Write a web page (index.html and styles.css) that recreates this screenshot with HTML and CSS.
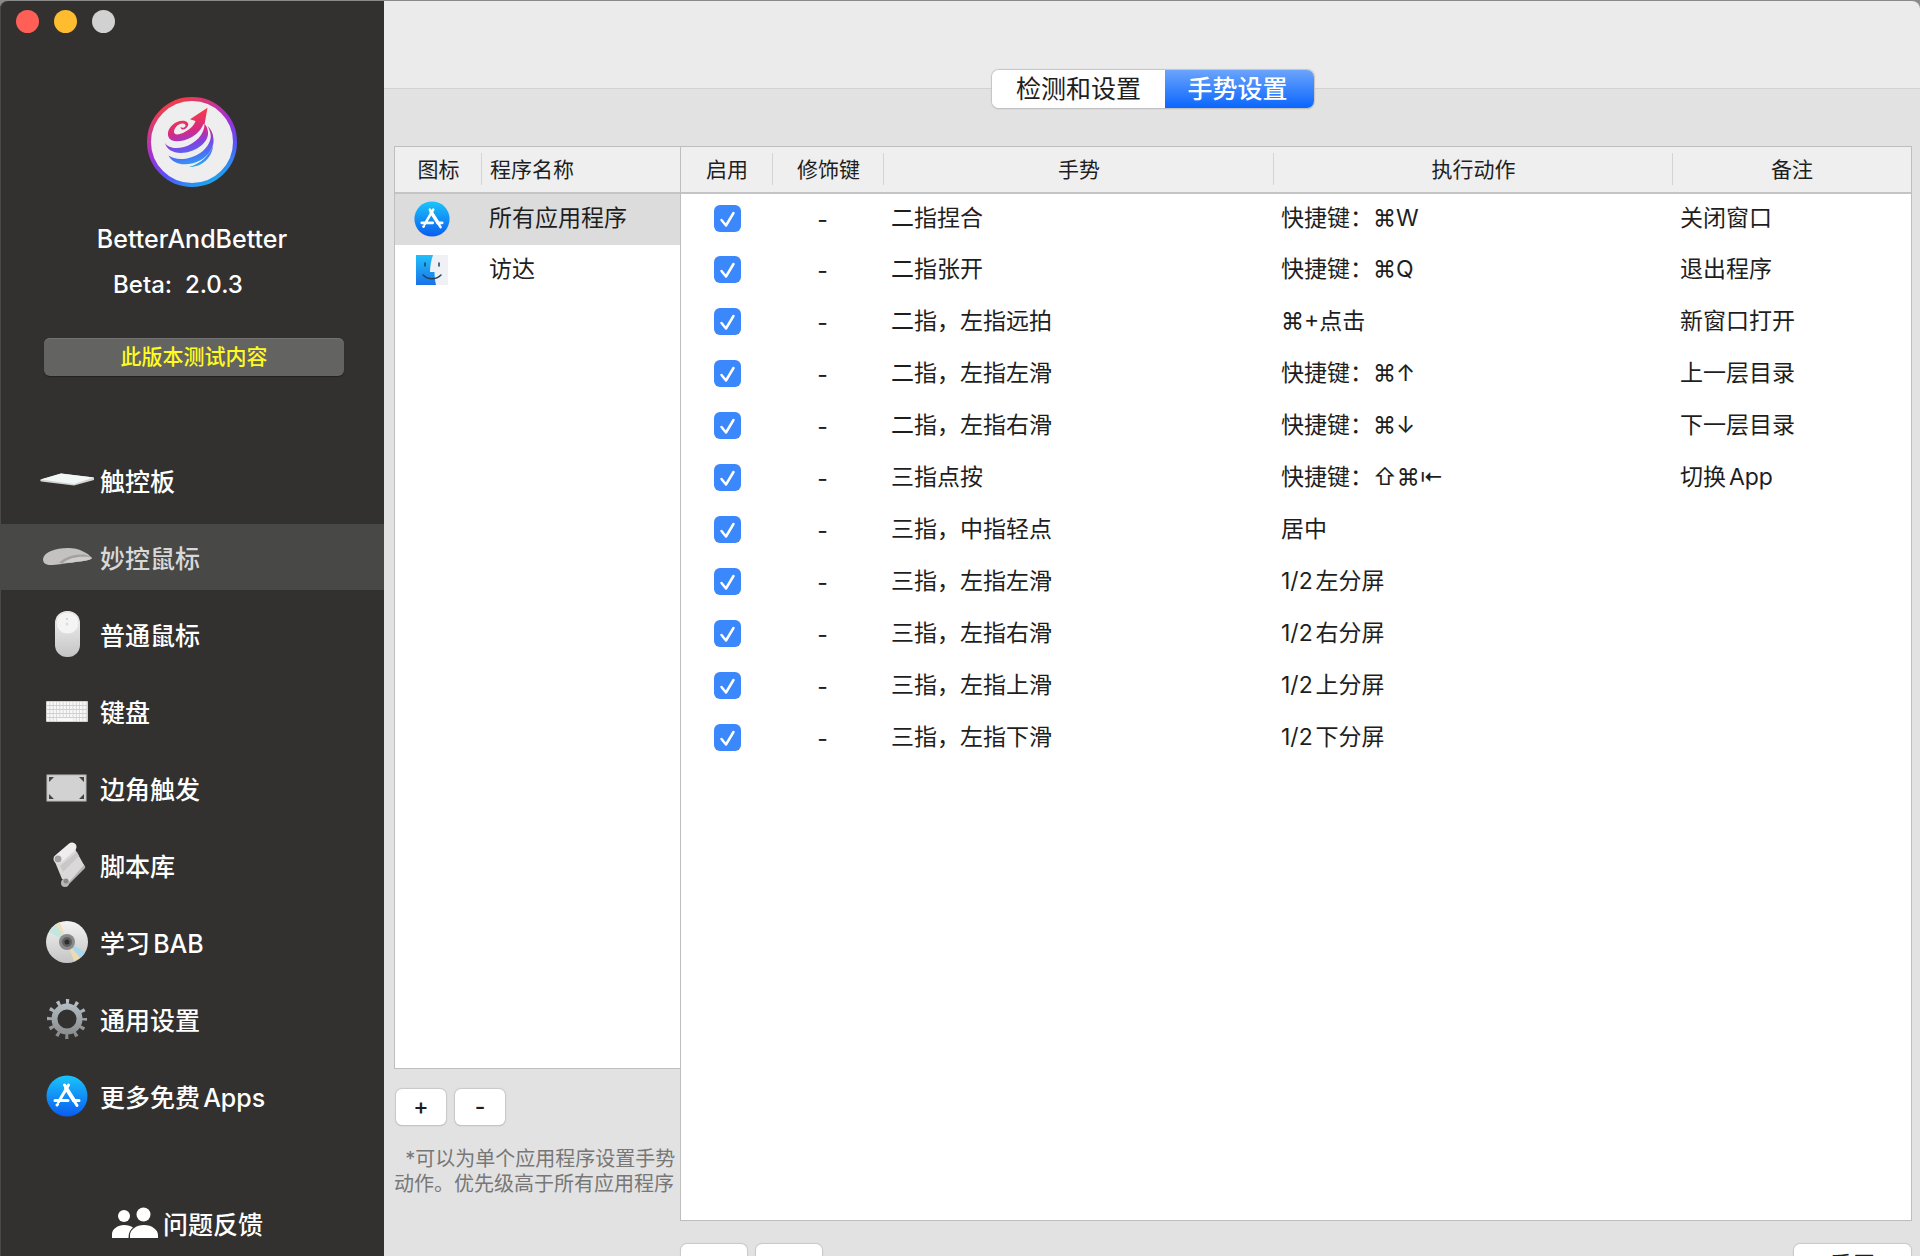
FILE: index.html
```html
<!DOCTYPE html>
<html lang="zh-CN">
<head>
  <meta charset="UTF-8">
  <meta name="viewport" content="width=device-width, initial-scale=1">
  <title>BetterAndBetter</title>
  <link rel="stylesheet" href="styles.css">
</head>
<body>
  <!-- shared gradients and icons -->
  <svg class="defs" aria-hidden="true">
    <defs>
      <linearGradient id="storeBlue" x1="0" y1="0" x2="0" y2="1">
        <stop offset="0" stop-color="#1ac4fb"/>
        <stop offset="1" stop-color="#0a5cf0"/>
      </linearGradient>
      <linearGradient id="silver" x1="0" y1="0" x2="0" y2="1">
        <stop offset="0" stop-color="#f4f4f4"/>
        <stop offset="1" stop-color="#c4c4c4"/>
      </linearGradient>
    </defs>
    <symbol id="appstore" viewBox="0 0 42 42">
      <circle cx="21" cy="21" r="20.5" fill="url(#storeBlue)"/>
      <g stroke="#fff" stroke-width="3" stroke-linecap="round">
        <path d="M22.500 10L12.500 27M9 25.500H22M27.500 25.500H33M18.500 10L31 30.500M11 30L11.500 29.500"/>
        <path d="M20 13L28 25.500" stroke-width="4"/>
      </g>
    </symbol>
  </svg>

  <div class="window">
    <aside class="sidebar">
      <div class="traffic">
        <button class="dot red" aria-label="关闭"></button>
        <button class="dot yellow" aria-label="最小化"></button>
        <button class="dot gray" aria-label="缩放"></button>
      </div>

      <div class="brand">
        <svg class="logo" viewBox="0 0 90 90" aria-hidden="true">
          <defs>
            <linearGradient id="ring" x1="0.250" y1="0" x2="0.750" y2="1">
              <stop offset="0" stop-color="#f8403c"/>
              <stop offset="0.450" stop-color="#a030d8"/>
              <stop offset="0.700" stop-color="#5a50f8"/>
              <stop offset="1" stop-color="#12b0f0"/>
            </linearGradient>
            <linearGradient id="swirl" gradientUnits="userSpaceOnUse" x1="38" y1="14" x2="50" y2="72">
              <stop offset="0" stop-color="#fb3d3d"/>
              <stop offset="0.350" stop-color="#d42a86"/>
              <stop offset="0.550" stop-color="#8440e0"/>
              <stop offset="0.750" stop-color="#4a70f6"/>
              <stop offset="1" stop-color="#22b4f0"/>
            </linearGradient>
          </defs>
          <circle cx="45" cy="45" r="43" fill="#eee" stroke="url(#ring)" stroke-width="4"/>
          <g fill="url(#swirl)">
            <path d="M60.500 10.700L43 22.300L48.500 24C47 29 42 33 36 36C30 38.500 26.500 37.500 27 34C28 29 33 26 36 26.500C39 27 39.500 29.500 37 30.500C35.500 31 34.500 30.500 33.500 30C34 34.500 40 32.500 41.300 28C41.500 24 36 22.500 30 25C23 28 19.500 35 21.500 40C24 46.500 36 45 45 40C51 36.500 54.500 31.500 56.500 27L57.500 27.500Z"/>
            <path d="M18 46C19.500 53 28 57.500 39 55.500C52 53 62 44 61 35C60.500 31 59.500 29 57.500 27C57.500 37 49 46.500 37 50C28 52.500 21 50.500 18 46Z"/>
            <path d="M21.500 58.500C25 65.500 34 69 45 66.500C58 63.500 67.500 53 66.500 42C66 36 64 32 60.500 29C64 35 65 41 62 46C58 54 50 59.500 40 61.500C32 63 26 61.500 21.500 58.500Z"/>
            <path d="M42 70C54 70.500 65 61 66 49C62 59 53 67 42 70Z"/>
          </g>
        </svg>
        <h1>BetterAndBetter</h1>
        <p class="version">Beta:&nbsp;&nbsp;2.0.3</p>
        <button class="notes">此版本测试内容</button>
      </div>

      <nav class="menu">
        <a href="#trackpad">
          <svg viewBox="0 0 56 48" aria-hidden="true"><path d="M1 24L22 17.500L55 21.500V24L35 29.500L2 25.500Z" fill="#d2d2d2"/><path d="M1 23.500L22 17.500L55 21.500L35 28Z" fill="#f3f6f7"/></svg>
          触控板
        </a>
        <a href="#magic-mouse" class="active">
          <svg viewBox="0 0 56 48" aria-hidden="true"><path d="M4 26C5 19 16 15 29 15C40 15 49 20 53 25C51 28 43 28 33 29.500C22 31 12 33 8 31.500C5 30.500 4 29 4 26Z" fill="#c4c2c0"/><path d="M20 30C26 24 34 21 45 21.500C48 22 51 23 53 25C50 28 42 28 33 29.500C28 30 24 31 20 30Z" fill="#a3a19f"/><path d="M24 30C30 25 38 23 50 24C52 24.500 52 25 53 25C50 28 42 28 33 29.500Z" fill="#cfcdcb"/></svg>
          妙控鼠标
        </a>
        <a href="#mouse">
          <svg viewBox="0 0 56 48" aria-hidden="true"><rect x="16" y="1" width="25" height="46" rx="12" fill="url(#silver)"/><rect x="17" y="2" width="23" height="22" rx="11" fill="#f4f4f4" stroke="#ddd"/><circle cx="28" cy="9" r="1" fill="#ccc"/><circle cx="28" cy="14" r="1.500" fill="#ddd"/></svg>
          普通鼠标
        </a>
        <a href="#keyboard">
          <svg viewBox="0 0 56 48" aria-hidden="true"><rect x="7" y="14" width="42" height="21" rx="1" fill="#d0d0d0"/><path d="M8 16.500H48M8 20.500H48M8 24.500H48M8 28.500H48M8 32.500H48" stroke="#f8f8f8" stroke-width="3" stroke-dasharray="2.500 0.800"/><path d="M20 32.500H34" stroke="#f8f8f8" stroke-width="3"/></svg>
          键盘
        </a>
        <a href="#corners">
          <svg viewBox="0 0 56 48" aria-hidden="true"><rect x="8" y="11" width="39" height="26" fill="#d2d2d2" stroke="#bbb"/><path d="M10 13H15L10 18ZM45 13H40L45 18ZM10 35H15L10 30ZM45 35H40L45 30Z" fill="#444"/></svg>
          边角触发
        </a>
        <a href="#scripts">
          <svg viewBox="0 0 56 48" aria-hidden="true">
            <path d="M27 42L43 26" stroke="#b5b3b3" stroke-width="6" stroke-linecap="round"/>
            <path d="M16 21L36 8L45 24L30 41L23 38Z" fill="#dad8d8"/>
            <path d="M38 11L21 25L24 31L40 15Z" fill="#c9c7c7"/>
            <path d="M19 18L33 6" stroke="#efeded" stroke-width="9" stroke-linecap="round"/>
            <circle cx="19" cy="18" r="3.500" fill="#a3a1a1"/>
            <circle cx="26" cy="42" r="4" fill="#b9b6b6"/>
            <circle cx="27" cy="40" r="2.500" fill="#8b8989"/>
          </svg>
          脚本库
        </a>
        <a href="#learn">
          <svg viewBox="0 0 56 48" aria-hidden="true"><circle cx="28" cy="24" r="21" fill="url(#silver)"/><path d="M28 24L10 14A21 21 0 0 1 17 6Z" fill="#c5e5df"/><path d="M28 24L17 6A21 21 0 0 1 21 4Z" fill="#f0dfb9"/><path d="M28 24L46 34A21 21 0 0 1 41 40Z" fill="#a9d7f0"/><path d="M28 24L41 40A21 21 0 0 1 35 43Z" fill="#eddcaf"/><circle cx="28" cy="24" r="8" fill="#8a8a8a"/><circle cx="28" cy="24" r="5" fill="#606060"/><circle cx="28" cy="24" r="2.500" fill="#2f2e2d"/></svg>
          学习BAB
        </a>
        <a href="#general">
          <svg viewBox="0 0 56 48" aria-hidden="true"><defs><linearGradient id="gearFill" gradientUnits="userSpaceOnUse" x1="0" y1="4" x2="0" y2="44"><stop offset="0" stop-color="#b8c4cc"/><stop offset="1" stop-color="#858585"/></linearGradient></defs><circle cx="28" cy="24" r="17.500" fill="none" stroke="url(#gearFill)" stroke-width="5" stroke-dasharray="3.163 6" stroke-dashoffset="1.580"/><circle cx="28" cy="24" r="12.500" fill="none" stroke="url(#gearFill)" stroke-width="6"/></svg>
          通用设置
        </a>
        <a href="#apps">
          <svg viewBox="0 0 56 48" aria-hidden="true"><use href="#appstore" x="7" y="3" width="42" height="42"/></svg>
          更多免费Apps
        </a>
      </nav>

      <a href="#feedback" class="feedback">
        <svg viewBox="0 0 48 32" aria-hidden="true"><g fill="#fff"><circle cx="13" cy="9" r="6"/><path d="M1 31V27C1 22 7 18 13 18C17 18 20 19 22 20.500C19 23 17.500 26 17.500 31Z"/><circle cx="32.500" cy="7.500" r="7"/><path d="M19 31V28C19 23 25 18 33 18C41 18 47 23 47 28V31Z"/></g></svg>
        问题反馈
      </a>
    </aside>

    <main class="main">
      <div class="tabs">
        <button>检测和设置</button>
        <button class="selected">手势设置</button>
      </div>

      <div class="content">
        <section class="programs">
          <div class="pane">
            <table>
              <colgroup><col class="col-icon"><col></colgroup>
              <thead>
                <tr><th>图标</th><th class="left">程序名称</th></tr>
              </thead>
              <tbody>
                <tr class="current">
                  <td><svg class="app-icon" viewBox="0 0 42 42" aria-hidden="true"><use href="#appstore"/></svg></td>
                  <td>所有应用程序</td>
                </tr>
                <tr>
                  <td><svg class="app-icon" viewBox="0 0 36 36" aria-hidden="true"><defs><linearGradient id="finder" x1="0" y1="0" x2="0" y2="1"><stop offset="0" stop-color="#20c0fa"/><stop offset="1" stop-color="#1a72e8"/></linearGradient></defs><rect x="2" y="3" width="32" height="30" fill="#f0f1f4"/><path d="M2 3H19C17 9 16 14 16 20H20.500C20.500 25 21 29 22 33H2Z" fill="url(#finder)"/><path d="M11 11V14M25 11V14M9 23C14 28 22 28 27 23" fill="none" stroke="#23405e" stroke-width="1.500" stroke-linecap="round"/></svg></td>
                  <td>访达</td>
                </tr>
              </tbody>
            </table>
          </div>
          <div class="tools">
            <button>+</button>
            <button>-</button>
          </div>
          <p class="hint">&nbsp; *可以为单个应用程序设置手势<br>动作。优先级高于所有应用程序</p>
        </section>

        <section class="gestures">
          <div class="pane">
            <table>
              <colgroup><col class="col-on"><col class="col-mod"><col class="col-gesture"><col class="col-action"><col></colgroup>
              <thead>
                <tr><th>启用</th><th>修饰键</th><th>手势</th><th>执行动作</th><th>备注</th></tr>
              </thead>
              <tbody>
                <tr><td><input type="checkbox" aria-label="启用" checked></td><td>-</td><td>二指捏合</td><td>快捷键：⌘W</td><td>关闭窗口</td></tr>
                <tr><td><input type="checkbox" aria-label="启用" checked></td><td>-</td><td>二指张开</td><td>快捷键：⌘Q</td><td>退出程序</td></tr>
                <tr><td><input type="checkbox" aria-label="启用" checked></td><td>-</td><td>二指，左指远拍</td><td>⌘+点击</td><td>新窗口打开</td></tr>
                <tr><td><input type="checkbox" aria-label="启用" checked></td><td>-</td><td>二指，左指左滑</td><td>快捷键：⌘↑</td><td>上一层目录</td></tr>
                <tr><td><input type="checkbox" aria-label="启用" checked></td><td>-</td><td>二指，左指右滑</td><td>快捷键：⌘↓</td><td>下一层目录</td></tr>
                <tr><td><input type="checkbox" aria-label="启用" checked></td><td>-</td><td>三指点按</td><td>快捷键：⇧⌘⇤</td><td>切换App</td></tr>
                <tr><td><input type="checkbox" aria-label="启用" checked></td><td>-</td><td>三指，中指轻点</td><td>居中</td><td></td></tr>
                <tr><td><input type="checkbox" aria-label="启用" checked></td><td>-</td><td>三指，左指左滑</td><td>1/2左分屏</td><td></td></tr>
                <tr><td><input type="checkbox" aria-label="启用" checked></td><td>-</td><td>三指，左指右滑</td><td>1/2右分屏</td><td></td></tr>
                <tr><td><input type="checkbox" aria-label="启用" checked></td><td>-</td><td>三指，左指上滑</td><td>1/2上分屏</td><td></td></tr>
                <tr><td><input type="checkbox" aria-label="启用" checked></td><td>-</td><td>三指，左指下滑</td><td>1/2下分屏</td><td></td></tr>
              </tbody>
            </table>
          </div>
          <div class="actions">
            <button aria-label="添加"></button>
            <button aria-label="删除"></button>
            <button class="reset">重置</button>
          </div>
        </section>
      </div>
    </main>
  </div>
</body>
</html>
```
FILE: styles.css
```css
* {
  box-sizing: border-box;
}

body {
  margin: 0;
  height: 100vh;
  overflow: hidden;
  background: #8a8a88;
  font-family: Inter, "Noto Sans CJK SC", sans-serif;
  font-size: 23px;
  color: #1e1e1e;
  text-autospace: normal;
}

h1, p {
  margin: 0;
}

button {
  padding: 0;
  border: none;
  font: inherit;
  color: inherit;
}

.defs {
  position: absolute;
  width: 0;
  height: 0;
}

/* the bottom of the window runs a little below the screen */
.window {
  display: flex;
  height: calc(100vh + 31px);
  padding-top: 1px;
}

/* sidebar */
.sidebar {
  display: flex;
  flex-direction: column;
  flex: 0 0 384px;
  background: #32312f;
  box-shadow: inset 1px 0 #4a4948;
  border-top-left-radius: 8px;
  color: #fff;
}

.traffic {
  display: flex;
  gap: 15px;
  padding: 9px 16px;
}

.dot {
  width: 23px;
  height: 23px;
  border-radius: 50%;
}

.red {
  background: #ff5f57;
}

.yellow {
  background: #febc2e;
}

.gray {
  background: #d1d1d1;
}

.brand {
  display: flex;
  flex-direction: column;
  align-items: center;
  padding-top: 55px;
}

.logo {
  width: 90px;
  height: 90px;
}

.brand h1,
.version {
  font-size: 25px;
  font-weight: 500;
  line-height: 46px;
}

.brand h1 {
  margin-top: 29px;
}

.version {
  padding-right: 28px;
  font-size: 24px;
}

.notes {
  align-self: stretch;
  height: 38px;
  margin: 30px 40px 0 44px;
  background: #636361;
  border-radius: 6px;
  box-shadow: inset 0 1px #737371, 0 1px 1px #222;
  color: #fffb1e;
  font-size: 21px;
  font-weight: 500;
  line-height: 36px;
}

.menu {
  display: flex;
  flex-direction: column;
  gap: 11px;
  margin-top: 71px;
}

.menu a,
.feedback {
  display: flex;
  align-items: center;
  color: #fff;
  font-size: 25px;
  font-weight: 500;
  text-decoration: none;
}

.menu a {
  gap: 5px;
  height: 66px;
  padding-left: 39px;
}

.menu svg {
  width: 56px;
  height: 48px;
}

.menu .active {
  background: #484846;
  color: #d8d8d8;
}

.feedback {
  gap: 4px;
  margin: 76px 0 0 111px;
}

.feedback svg {
  width: 48px;
  height: 32px;
}

/* main area */
.main {
  display: flex;
  flex-direction: column;
  flex: 1;
  min-width: 0;
  background: linear-gradient(#ebebeb 87px, #d2d2d2 87px, #d2d2d2 88px, #e2e2e2 88px);
  border-top-right-radius: 8px;
}

.tabs {
  display: flex;
  align-self: center;
  margin: 69px 0 0 2px;
  border-radius: 7px;
  background: #fff;
  box-shadow: 0 0 1px 1px #c4c4c4, 0 1px 1px #aaa;
  overflow: hidden;
}

.tabs button {
  width: 173px;
  height: 38px;
  background: #fff;
  font-size: 25px;
  line-height: 36px;
}

.tabs .selected {
  width: 149px;
  padding-right: 4px;
  background: linear-gradient(#6ba4fb, #0a66ff);
  color: #fff;
  font-weight: 500;
}

.content {
  display: flex;
  flex: 1;
  min-height: 0;
  padding: 38px 8px 5px 10px;
}

.programs,
.gestures {
  display: flex;
  flex-direction: column;
}

.programs {
  width: 286px;
}

.gestures {
  flex: 1;
}

.pane {
  flex: 1;
  background: #fff;
  border: 1px solid #bebebe;
}

.programs .pane {
  border-right: none;
}

table {
  width: 100%;
  table-layout: fixed;
  border-collapse: collapse;
}

th {
  height: 46px;
  padding: 0 0 4px;
  background: linear-gradient(#d4d4d4, #d4d4d4) right 6px / 1px 32px no-repeat #efefef;
  border-bottom: 2px solid #c4c4c4;
  font-size: 21px;
  font-weight: 400;
}

th:last-child {
  background: #efefef;
}

th.left {
  padding-left: 8px;
  text-align: left;
}

td {
  height: 52px;
  padding: 0 7px 4px;
  line-height: 32px;
}

.current {
  background: #dcdcdc;
}

.col-icon {
  width: 87px;
}

.col-on {
  width: 92px;
}

.col-mod {
  width: 111px;
}

.col-gesture {
  width: 390px;
}

.col-action {
  width: 399px;
}

.programs td:first-child {
  padding: 0 0 2px 19px;
}

.app-icon {
  display: block;
  width: 36px;
  height: 36px;
}

.gestures td:first-child {
  padding: 0 0 3px;
  text-align: center;
}

.gestures td:nth-child(2) {
  padding: 0 12px 0 0;
  text-align: center;
}

input[type="checkbox"] {
  appearance: none;
  display: block;
  width: 27px;
  height: 27px;
  margin: 0 auto;
  border-radius: 6px;
  background: #3b87fc url("data:image/svg+xml,%3Csvg xmlns='http://www.w3.org/2000/svg' viewBox='0 0 27 27'%3E%3Cpath d='M7.5 15l4.500 5.500L19.500 8' fill='none' stroke='white' stroke-width='2.500' stroke-linecap='round' stroke-linejoin='round'/%3E%3C/svg%3E");
}

.tools,
.actions {
  display: flex;
  gap: 9px;
}

.tools {
  margin: 20px 0 0 2px;
}

.tools button,
.actions button {
  height: 36px;
  background: #fff;
  border-radius: 6px;
  box-shadow: 0 0 1px 1px #c8c8c8, 0 1px 1px #aaa;
}

.tools button {
  width: 50px;
  font-weight: 500;
}

.hint {
  margin: 22px 0 85px;
  font-size: 20px;
  line-height: 25px;
  color: #777;
  white-space: nowrap;
}

.actions {
  margin: 23px 1px 0;
}

.actions button {
  width: 66px;
  height: 38px;
}

.actions .reset {
  width: 117px;
  margin-left: auto;
}
```
